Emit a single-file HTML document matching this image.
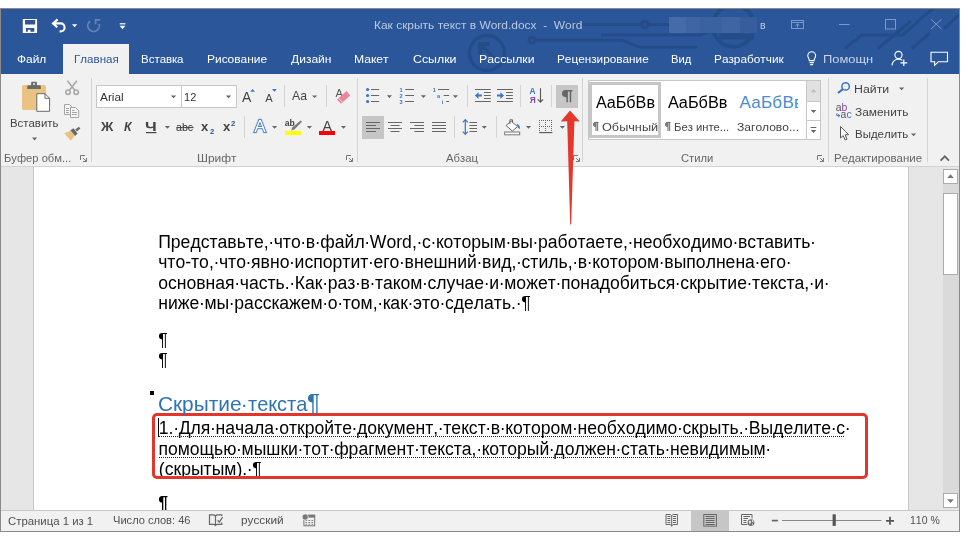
<!DOCTYPE html>
<html lang="ru"><head><meta charset="utf-8"><title>Word</title>
<style>
html,body{margin:0;padding:0;}
body{width:968px;height:541px;overflow:hidden;background:#fff;position:relative;font-family:"Liberation Sans",sans-serif;}
div,span,i{box-sizing:border-box;}
.a{position:absolute;}
.t{font-kerning:none;position:absolute;white-space:nowrap;line-height:1;transform-origin:0 0;}
#win{left:0;top:8px;width:960px;height:524px;background:#2b579a;overflow:hidden;}
#ribbon{left:1px;top:66px;width:958px;height:92px;background:#f1f1f1;}
#ribline{left:1px;top:158px;width:958px;height:1px;background:#d2d2d2;}
#tab{left:63px;top:36px;width:66px;height:31px;background:#f1f1f1;}
#docbg{left:1px;top:159px;width:958px;height:343px;background:#e6e6e6;}
#page{left:32px;top:0;width:876px;height:343px;background:#fff;border-right:1px solid #c8c8c8;border-left:1px solid #c8c8c8;overflow:hidden;}
#status{left:1px;top:502px;width:958px;height:21px;background:#f1f1f1;border-top:1px solid #c8c8c8;}
.bd{background:#8a8a8a;}
.vs{width:1px;background:#d4d4d4;}
.box{background:#fff;border:1px solid #c6c6c6;}
.sel{background:#c6c6c6;}
.dl{font-kerning:none;position:absolute;white-space:nowrap;line-height:1;font-size:17.6px;color:#000;transform-origin:0 0;}
.dl i{font-style:normal;margin:0 -0.37px;}
.dl u{text-decoration:none;background-image:linear-gradient(to right,#000 50%,transparent 50%);background-size:2px 1px;background-repeat:repeat-x;background-position:0 16.7px;}
.dot{height:1px;background-image:linear-gradient(to right,#222 50%,transparent 50%);background-size:2px 1px;background-repeat:repeat-x;}
#doc,#texts{will-change:transform;}

</style></head>
<body>
<div id="win" class="a">
  <svg class="a" style="left:0;top:-8px;" width="968" height="82" viewBox="0 0 968 82">
    <g fill="none" stroke="#244c89" stroke-width="3">
      <circle cx="487" cy="53" r="17.5" stroke-width="3.4"/>
      <path d="M495 59 L480 44 M480 54 V44 H490" stroke-width="3.8"/>
      <path d="M560 24.5 H641 M648.5 24.5 H672" />
      <circle cx="644.7" cy="24.5" r="3.2"/>
      <circle cx="532" cy="40.3" r="3"/>
      <path d="M535 40.3 H622 L640.6 47.3 H697"/>
      <path d="M601 34.9 H700 L712 30"/>
      <circle cx="733.5" cy="26" r="20.7" stroke-width="4"/>
      <path d="M719 31 H742 V33.5 H750 L754 36.5 V39.5 H719 Z" fill="#244c89" stroke="none"/>
      <path d="M845 48.5 L861.7 34.9 H903 L923.6 16.3 L934 8 M878 48.5 L911 21 M944 28.7 L960 14.2 M912 48.5 L930 33"/>
    </g>
  </svg>
  <div id="tab" class="a"></div>
  <div id="ribbon" class="a"></div>
  <div id="ribline" class="a"></div>
  <div id="docbg" class="a">
    <div id="page" class="a"></div>
    <!-- scrollbar -->
    <div class="a" style="left:942px;top:2px;width:16px;height:339px;background:#dadada;"></div>
    <div class="a" style="left:942px;top:2px;width:15px;height:15px;background:#fff;border:1px solid #ababab;"></div>
    <div class="a" style="left:942px;top:26px;width:15px;height:82px;background:#fff;border:1px solid #ababab;"></div>
    <div class="a" style="left:942px;top:326px;width:15px;height:15px;background:#fff;border:1px solid #ababab;"></div>
  </div>
  <div id="status" class="a">
    <div class="a sel" style="left:690px;top:0;width:38px;height:21px;"></div>
  </div>
  <!-- window border -->
  <div class="a bd" style="left:0;top:0;width:960px;height:1px;"></div>
  <div class="a bd" style="left:0;top:523px;width:960px;height:1px;"></div>
  <div class="a bd" style="left:0;top:0;width:1px;height:524px;"></div>
  <div class="a bd" style="left:959px;top:0;width:1px;height:524px;"></div>
</div>
<!-- ribbon controls (page coords) -->
<div class="a vs" style="left:91px;top:78px;height:84px;"></div>
<div class="a vs" style="left:357px;top:78px;height:84px;"></div>
<div class="a vs" style="left:582px;top:78px;height:84px;"></div>
<div class="a vs" style="left:828px;top:78px;height:84px;"></div>
<div class="a vs" style="left:927px;top:78px;height:84px;"></div>
<div class="a vs" style="left:284px;top:85px;height:22px;"></div>
<div class="a vs" style="left:326px;top:85px;height:22px;"></div>
<div class="a vs" style="left:467px;top:85px;height:22px;"></div>
<div class="a vs" style="left:520px;top:85px;height:22px;"></div>
<div class="a vs" style="left:551px;top:85px;height:22px;"></div>
<div class="a vs" style="left:244px;top:116px;height:22px;"></div>
<div class="a vs" style="left:454px;top:116px;height:22px;"></div>
<div class="a vs" style="left:496px;top:116px;height:22px;"></div>
<div class="a box" style="left:96px;top:85px;width:86px;height:23px;"></div>
<div class="a box" style="left:181px;top:85px;width:56px;height:23px;"></div>
<div class="a sel" style="left:362px;top:116px;width:22px;height:23px;"></div>
<div class="a sel" style="left:556px;top:85px;width:22px;height:23px;"></div>
<!-- styles gallery -->
<div class="a box" style="left:588px;top:80px;width:233px;height:60px;"></div>
<div class="a" style="left:589.3px;top:82px;width:72px;height:56px;border:3.5px solid #c6c6c6;"></div>
<div class="a" style="left:806px;top:81px;width:14px;height:21px;background:#e1e1e1;"></div>
<div class="a" style="left:806px;top:80px;width:1px;height:60px;background:#c6c6c6;"></div>
<div class="a" style="left:806px;top:101px;width:15px;height:1px;background:#c6c6c6;"></div>
<div class="a" style="left:806px;top:120px;width:15px;height:1px;background:#c6c6c6;"></div>
<div class="a" style="left:739px;top:84px;width:59px;height:30px;overflow:hidden;"><span class="t" style="left:0.5px;top:10px;font-size:17px;color:#4a8bd6;font-kerning:none;letter-spacing:0.3px;">АаБбВв</span></div>

<div id="doc" class="a" style="left:34px;top:167px;width:874px;height:343px;overflow:hidden;">
<div class="dl" style="left:124.20px;top:67.00px;">Представьте,<i>·</i>что<i>·</i>в<i>·</i>файл<i>·</i>Word,<i>·</i>с<i>·</i>которым<i>·</i>вы<i>·</i>работаете,<i>·</i>необходимо<i>·</i>вставить<i>·</i></div>
<div class="dl" style="left:124.20px;top:87.00px;">что-то,<i>·</i>что<i>·</i>явно<i>·</i>испортит<i>·</i>его<i>·</i>внешний<i>·</i>вид,<i>·</i>стиль,<i>·</i>в<i>·</i>котором<i>·</i>выполнена<i>·</i>его<i>·</i></div>
<div class="dl" style="left:124.20px;top:108.00px;">основная<i>·</i>часть.<i>·</i>Как<i>·</i>раз<i>·</i>в<i>·</i>таком<i>·</i>случае<i>·</i>и<i>·</i>может<i>·</i>понадобиться<i>·</i>скрытие<i>·</i>текста,<i>·</i>и<i>·</i></div>
<div class="dl" style="left:124.20px;top:128.00px;">ниже<i>·</i>мы<i>·</i>расскажем<i>·</i>о<i>·</i>том,<i>·</i>как<i>·</i>это<i>·</i>сделать.<i>·</i>¶</div>
<div class="dl" style="left:124.20px;top:165.00px;">¶</div>
<div class="dl" style="left:124.20px;top:185.00px;">¶</div>
<div class="dl" style="left:124.80px;top:253.00px;">1.<i>·</i>Для<i>·</i>начала<i>·</i>откройте<i>·</i>документ,<i>·</i>текст<i>·</i>в<i>·</i>котором<i>·</i>необходимо<i>·</i>скрыть.<i>·</i>Выделите<i>·</i>с<i>·</i></div>
<div class="dl" style="left:124.40px;top:274.00px;">помощью<i>·</i>мышки<i>·</i>тот<i>·</i>фрагмент<i>·</i>текста,<i>·</i>который<i>·</i>должен<i>·</i>стать<i>·</i>невидимым<i>·</i></div>
<div class="dl" style="left:124.80px;top:294.00px;">(скрытым).<i>·</i>¶</div>
<div class="dl" style="left:124.20px;top:328.00px;font-weight:bold;">¶</div>
<div class="a" style="left:116.3px;top:224.0px;width:3.5px;height:3.5px;background:#000;"></div>
<div class="a" style="left:124.0px;top:251.0px;width:1px;height:19.4px;background:#000;"></div>
<div class="a dot" style="left:125.0px;top:269.0px;width:684.6px;"></div>
<div class="a dot" style="left:125.0px;top:290.0px;width:606.0px;"></div>
<div class="a" style="left:118.3px;top:245.8px;width:716px;height:66px;border:3px solid #e2352b;border-radius:5px;"></div>
</div>

<div id="texts">
<span class="t" style="left:373.88px;top:19.00px;font-size:11.7px;color:#bac8e1;transform:scaleX(1.0228);white-space:pre;">Как скрыть текст в Word.docx  -  Word</span>
<span class="t" style="left:760.33px;top:19.00px;font-size:11.7px;color:#bac8e1;transform:scaleX(0.9000);">в</span>
<span class="t" style="left:16.73px;top:53.00px;font-size:11.7px;color:#fff;transform:scaleX(1.0202);">Файл</span>
<span class="t" style="left:73.51px;top:53.00px;font-size:11.7px;color:#2b579a;transform:scaleX(0.9931);">Главная</span>
<span class="t" style="left:141.12px;top:53.00px;font-size:11.7px;color:#fff;transform:scaleX(0.9812);">Вставка</span>
<span class="t" style="left:207.28px;top:53.00px;font-size:11.7px;color:#fff;transform:scaleX(1.0226);">Рисование</span>
<span class="t" style="left:290.90px;top:53.00px;font-size:11.7px;color:#fff;transform:scaleX(1.0312);">Дизайн</span>
<span class="t" style="left:354.36px;top:53.00px;font-size:11.7px;color:#fff;transform:scaleX(1.0438);">Макет</span>
<span class="t" style="left:412.67px;top:53.00px;font-size:11.7px;color:#fff;transform:scaleX(1.0575);">Ссылки</span>
<span class="t" style="left:479.25px;top:53.00px;font-size:11.7px;color:#fff;transform:scaleX(1.0510);">Рассылки</span>
<span class="t" style="left:556.69px;top:53.00px;font-size:11.7px;color:#fff;transform:scaleX(1.0078);">Рецензирование</span>
<span class="t" style="left:670.74px;top:53.00px;font-size:11.7px;color:#fff;transform:scaleX(0.9600);">Вид</span>
<span class="t" style="left:713.69px;top:53.00px;font-size:11.7px;color:#fff;transform:scaleX(1.0103);">Разработчик</span>
<span class="t" style="left:822.80px;top:53.00px;font-size:11.7px;color:#c9d5ea;transform:scaleX(1.1040);">Помощн</span>
<span class="t" style="left:9.53px;top:117.00px;font-size:11.7px;color:#444;transform:scaleX(0.9741);">Вставить</span>
<span class="t" style="left:3.72px;top:153.00px;font-size:10.75px;color:#666;transform:scaleX(1.0397);">Буфер обм...</span>
<span class="t" style="left:99.80px;top:91.00px;font-size:11.7px;color:#333;transform:scaleX(1.0110);">Arial</span>
<span class="t" style="left:184.19px;top:91.00px;font-size:11.7px;color:#333;transform:scaleX(0.9447);">12</span>
<span class="t" style="left:100.60px;top:121.00px;font-size:12.6px;color:#444;font-weight:bold;transform:scaleX(1.0783);">Ж</span>
<span class="t" style="left:123.96px;top:121.00px;font-size:12.6px;color:#444;font-weight:bold;font-style:italic;transform:scaleX(0.9697);">К</span>
<span class="t" style="left:145.41px;top:121.00px;font-size:12.6px;color:#444;font-weight:bold;transform:scaleX(1.3241);">Ч</span>
<span class="t" style="left:176.41px;top:122.00px;font-size:10.75px;color:#333;transform:scaleX(0.9879);">abc</span>
<span class="t" style="left:201.15px;top:120.00px;font-size:13px;color:#444;font-weight:bold;transform:scaleX(1.0074);">x</span>
<span class="t" style="left:222.75px;top:120.00px;font-size:13px;color:#444;font-weight:bold;transform:scaleX(1.0074);">x</span>
<span class="t" style="left:209.50px;top:129.00px;font-size:6.4px;color:#2b579a;font-weight:bold;transform:scaleX(1.2000);">2</span>
<span class="t" style="left:231.30px;top:121.00px;font-size:6.4px;color:#2b579a;font-weight:bold;transform:scaleX(1.2000);">2</span>
<span class="t" style="left:196.77px;top:153.00px;font-size:10.75px;color:#666;transform:scaleX(1.1108);">Шрифт</span>
<span class="t" style="left:292.00px;top:89.00px;font-size:13px;color:#444;transform:scaleX(0.9375);">Aa</span>
<span class="t" style="left:446.30px;top:153.00px;font-size:10.75px;color:#666;transform:scaleX(1.0479);">Абзац</span>
<span class="t" style="left:680.88px;top:153.00px;font-size:10.75px;color:#666;transform:scaleX(1.0454);">Стили</span>
<span class="t" style="left:833.80px;top:153.00px;font-size:10.75px;color:#666;transform:scaleX(1.0663);">Редактирование</span>
<span class="t" style="left:596.00px;top:95.00px;font-size:16px;color:#000;transform:scaleX(1.0095);">АаБбВв</span>
<span class="t" style="left:667.60px;top:95.00px;font-size:16px;color:#000;transform:scaleX(1.0165);">АаБбВв</span>
<span class="t" style="left:601.51px;top:122.00px;font-size:10.75px;color:#444;transform:scaleX(1.1805);">Обычный</span>
<span class="t" style="left:674.11px;top:122.00px;font-size:10.75px;color:#444;transform:scaleX(1.0471);">Без инте...</span>
<span class="t" style="left:737.14px;top:122.00px;font-size:10.75px;color:#444;transform:scaleX(1.1219);">Заголово...</span>
<span class="t" style="left:854.45px;top:83.00px;font-size:11.7px;color:#444;transform:scaleX(1.0540);">Найти</span>
<span class="t" style="left:854.99px;top:106.00px;font-size:11.7px;color:#444;transform:scaleX(1.0175);">Заменить</span>
<span class="t" style="left:854.52px;top:128.00px;font-size:11.7px;color:#444;transform:scaleX(0.9820);">Выделить</span>
<span class="t" style="left:7.57px;top:516.00px;font-size:10.75px;color:#505050;transform:scaleX(1.0571);">Страница 1 из 1</span>
<span class="t" style="left:112.73px;top:515.00px;font-size:10.75px;color:#505050;transform:scaleX(1.0332);">Число слов: 46</span>
<span class="t" style="left:240.88px;top:515.00px;font-size:10.75px;color:#505050;transform:scaleX(1.0960);">русский</span>
<span class="t" style="left:910.07px;top:515.00px;font-size:10.75px;color:#505050;transform:scaleX(0.9763);">110 %</span>
<span class="t" style="left:157.90px;top:394.00px;font-size:20.9px;color:#2e74b5;">Скрытие</span>
<span class="t" style="left:240.70px;top:394.00px;font-size:20.9px;color:#2e74b5;">·</span>
<span class="t" style="left:247.76px;top:394.00px;font-size:20.9px;color:#2e74b5;transform:scaleX(0.9571);">текста</span>
<span class="t" style="left:307.36px;top:392.00px;font-size:23.5px;color:#2e74b5;transform:scaleX(1.0419);">¶</span>
</div>
<svg class="a" style="left:0;top:0;" width="968" height="541" viewBox="0 0 968 541">
<!--TITLE-->
<g id="qat" fill="none" stroke="#fff">
  <!-- save -->
  <path d="M22.8 19.1 H37.1 V32.9 H22.8 Z M25 20 V24.4 H35.2 V20 Z M25.9 28 V31.7 H27.8 V29.8 H30.5 V31.7 H34.3 V28 Z" fill="#fff" fill-rule="evenodd" stroke="none"/>
  <!-- undo -->
  <path d="M57.6 19.4 L53 23.4 L57.2 27.2 M53.4 23.4 H60.6 A4 4 0 0 1 60.6 31.4 H59.6" stroke-width="2.1" stroke-linejoin="miter"/>
  <path d="M72 24.2 h5.2 l-2.6 3z" fill="#fff" stroke="none"/>
  <!-- redo (disabled) -->
  <g stroke="#6482ba" stroke-width="1.8">
    <path d="M99.2 24.1 A5.8 5.8 0 1 1 89.9 21.2"/>
    <path d="M95.6 24.3 V19.9 H100.2" />
  </g>
  <!-- customize -->
  <path d="M119.7 23.8 H125.4" stroke-width="1.2"/>
  <path d="M119.7 25.8 h5.7 l-2.85 3.4z" fill="#fff" stroke="none"/>
</g>
<!-- window controls (dim) -->
<g fill="none" stroke="#7f98c6" stroke-width="1">
  <rect x="791.5" y="20.5" width="12" height="8"/>
  <path d="M791.5 22.5 H803.5 M797.5 27.5 V24 M795.6 25.6 L797.5 23.8 L799.4 25.6"/>
  <path d="M839 24.5 H849.5"/>
  <rect x="885.5" y="19.5" width="10" height="9.5"/>
  <path d="M931 19.3 L941.5 29 M941.5 19.3 L931 29"/>
</g>
<!-- blurred name -->
<rect x="669" y="17" width="88" height="16" fill="#3f65a2"/>
<rect x="669" y="17" width="17" height="16" fill="#456ca9"/>
<rect x="700" y="17" width="22" height="16" fill="#3b62a0"/>
<rect x="740" y="17" width="17" height="16" fill="#375d9d"/>
<!-- tab icons -->
<g fill="none" stroke="#fff" stroke-width="1.1">
  <!-- bulb -->
  <path d="M809.3 60.6 C809.3 58.6 807.8 58 807.8 55.6 A3.9 3.9 0 0 1 815.6 55.6 C815.6 58 814.1 58.6 814.1 60.6 Z M809.6 62.6 H813.8 M810.2 64.6 H813.2"/>
  <!-- share -->
  <circle cx="898.5" cy="55" r="3.6"/>
  <path d="M892 65.4 C892.6 60.8 895.5 59.2 898.5 59.2 C900 59.2 901.4 59.6 902.4 60.4"/>
  <path d="M903.8 59.5 V66 M900.5 62.8 H907.2" stroke-width="1.2"/>
  <!-- comment -->
  <path d="M931 52.3 H947.5 V61.8 H938.3 L934.6 65.3 V61.8 H931 Z"/>
</g>
<!--RIBBON-->
<g id="clip">
  <!-- paste -->
  <rect x="22" y="85" width="24" height="25" rx="1.6" fill="#eac282"/>
  <path d="M27.2 89 V86.6 Q27.2 85.3 28.5 85.3 H31.1 V83 Q31.1 81.8 32.3 81.8 H35.7 Q36.9 81.8 36.9 83 V85.3 H39.5 Q40.8 85.3 40.8 86.6 V89 Z M33 83.2 V84.8 H35 V83.2 Z" fill="#6a6a6a" fill-rule="evenodd"/>
  <path d="M36.8 93.7 H45 L49.6 98.3 V111.3 H36.8 Z" fill="#fff" stroke="#6a6a6a" stroke-width="1"/>
  <path d="M45 93.7 V98.3 H49.6" fill="none" stroke="#6a6a6a" stroke-width="1"/>
  <path d="M32 137.6 h5.2 l-2.6 2.8z" fill="#666"/>
  <!-- scissors -->
  <g fill="none" stroke="#a8a8a8" stroke-width="1.6">
    <path d="M67.4 80.8 L75 90.4 M76.8 80.8 L69.2 90.4"/>
    <circle cx="68" cy="92.2" r="2.2"/><circle cx="76.2" cy="92.2" r="2.2"/>
  </g>
  <!-- copy -->
  <g fill="#f4f4f4" stroke="#a6a6a6" stroke-width="1">
    <path d="M64.5 104.5 H69.5 L72.5 107.5 V114.5 H64.5 Z"/>
    <path d="M70.5 107.5 H75.5 L78.7 110.7 V117.5 H70.5 Z"/>
    <path d="M66 108.5 H69 M66 110.5 H69 M66 112.5 H69 M72 112.5 H77 M72 114.5 H77 M72 110.5 H74.5" fill="none"/>
  </g>
  <!-- format painter -->
  <path d="M64.3 133.2 L70.6 130.8 L74.6 136 L70.8 140.8 Z" fill="#eac282"/>
  <path d="M70.4 130.2 L73.6 128.2 L77.6 133.4 L75 136 Z" fill="#6a6a6a"/>
  <path d="M75.3 129.6 L78.8 126.7 L80.4 128.4 L76.9 131.5 Z" fill="#6a6a6a"/>
</g>
<!--FONT-->
<g id="font" font-family="Liberation Sans, sans-serif">
  <!-- combobox arrows -->
  <path d="M170.8 95.4 h5.4 l-2.7 2.8z M225.8 95.4 h5.4 l-2.7 2.8z" fill="#666"/>
  <!-- grow/shrink -->
  <text x="242.1" y="102" font-size="14" fill="#444">A</text>
  <path d="M250.2 91.8 h4.8 l-2.4 -2.8z" fill="#3a76c4"/>
  <text x="265.2" y="102" font-size="11.2" fill="#444">A</text>
  <path d="M272 89 h4.8 l-2.4 2.8z" fill="#3a76c4"/>
  <path d="M312 95.4 h5.2 l-2.6 2.7z" fill="#666"/>
  <!-- clear formatting -->
  <text x="335.6" y="97" font-size="11" fill="#555">A</text>
  <path d="M346.6 91 L350.2 95.5 L341 103.8 L337 99.6 Z" fill="#e8869b"/>
  <path d="M338.6 98.2 L342.6 102.4" stroke="#f7d9df" stroke-width="1" fill="none"/>
  <!-- underline of Ч, strike of abc -->
  <path d="M146 132.6 H156.4" stroke="#444" stroke-width="1.2"/>
  <path d="M176.4 127.6 H193.6" stroke="#444" stroke-width="1"/>
  <path d="M164.8 126.1 h5.2 l-2.6 2.7z" fill="#666"/>
  <!-- text effects -->
  <text x="254.2" y="132.2" font-size="17.2" fill="#9fc0ea" stroke="#9fc0ea" stroke-width="3" opacity=".5">A</text>
  <text x="254.2" y="132.2" font-size="17.2" fill="#fff" stroke="#2f6fc0" stroke-width="1.5" paint-order="stroke">A</text>
  <path d="M272 126.1 h5.2 l-2.6 2.7z" fill="#666"/>
  <!-- highlight -->
  <text x="284.8" y="126.4" font-size="8.6" font-weight="bold" fill="#444">ab</text>
  <path d="M300.6 120.4 L302 121.8 L294.4 129.6 L291.2 130.6 L292.2 127.4 Z" fill="#7a7a7a"/>
  <rect x="285" y="131" width="16.2" height="4" fill="#ffff00"/>
  <path d="M306.8 126.1 h5.2 l-2.6 2.7z" fill="#666"/>
  <!-- font color -->
  <text x="322.4" y="131" font-size="14.2" fill="#444">A</text>
  <rect x="319" y="131" width="16" height="4" fill="#ff0000"/>
  <path d="M340.9 126.1 h5.2 l-2.6 2.7z" fill="#666"/>
  <!-- launcher -->
  <path d="M346.5 155.5 H351 M346.5 155.5 V160 M352.5 158 V161.5 H349 M349.2 158.2 L352.3 161.3" stroke="#777" stroke-width="1" fill="none"/>
</g>
<path d="M80.5 155.5 H85 M80.5 155.5 V160 M86.5 158 V161.5 H83 M83.2 158.2 L86.3 161.3" stroke="#777" stroke-width="1" fill="none"/>
<!--PARA-->
<g id="para" font-family="Liberation Sans, sans-serif">
<path d="M371.0 89.5 H379.2 M371.0 95.5 H379.2 M371.0 101.5 H379.2 " stroke="#666" stroke-width="1" fill="none"/>
<circle cx="367.6" cy="89.5" r="1.6" fill="#3a76c4"/>
<circle cx="367.6" cy="95.5" r="1.6" fill="#3a76c4"/>
<circle cx="367.6" cy="101.5" r="1.6" fill="#3a76c4"/>
<path d="M386.8 95.2 h5.2 l-2.6 2.7z M420.8 95.2 h5.2 l-2.6 2.7z M452.8 95.2 h5.2 l-2.6 2.7z" fill="#666"/>
<path d="M405.2 89.5 H414.0 M405.2 95.5 H414.0 M405.2 101.5 H414.0 " stroke="#666" stroke-width="1" fill="none"/>
<text x="399.6" y="91.6" font-size="5.6" font-weight="bold" fill="#3a76c4">1</text>
<text x="399.6" y="97.6" font-size="5.6" font-weight="bold" fill="#3a76c4">2</text>
<text x="399.6" y="103.6" font-size="5.6" font-weight="bold" fill="#3a76c4">3</text>
<path d="M438 89.5 H449.2 M443.6 95.5 H449.2 M446.2 101.5 H449.2" stroke="#666" stroke-width="1" fill="none"/>
<text x="432.8" y="91.6" font-size="5.6" font-weight="bold" fill="#3a76c4">1</text><text x="437" y="97.6" font-size="5.6" font-weight="bold" fill="#3a76c4">a</text><text x="441.8" y="103.6" font-size="5.6" font-weight="bold" fill="#3a76c4">i</text>
<path d="M474.9 89.5 H490.8 M483.9 92.5 H490.8 M483.9 95.5 H490.8 M483.9 98.5 H490.8 M474.9 101.5 H490.8" stroke="#666" stroke-width="1" fill="none"/>
<path d="M474.9 95.5 L478.5 92.3 V94.6 H481.9 V96.6 H478.5 V98.9 Z" fill="#3a76c4"/>
<path d="M497.0 89.5 H512.9 M506.0 92.5 H512.9 M506.0 95.5 H512.9 M506.0 98.5 H512.9 M497.0 101.5 H512.9" stroke="#666" stroke-width="1" fill="none"/>
<path d="M504.0 95.5 L500.4 92.3 V94.6 H497.0 V96.6 H500.4 V98.9 Z" fill="#3a76c4"/>
<text x="529.6" y="94.3" font-size="8.4" font-weight="bold" fill="#3a76c4">A</text><text x="529.8" y="102.7" font-size="8.4" font-weight="bold" fill="#8b44ac">Я</text>
<path d="M540.5 88.3 V102 M537.9 99.4 L540.5 102.2 L543.1 99.4" stroke="#555" stroke-width="1.1" fill="none"/>
<path d="M565.6 97.2 A3.6 3.6 0 0 1 565.6 90 H572.4 V91.4 H571.2 V102.2 H569.7 V91.4 H567.9 V102.2 H566.4 V97.2 Z" fill="#666"/>
<path d="M366.0 122.5 H380.0 M366.0 125.5 H376.0 M366.0 128.5 H380.0 M366.0 131.5 H376.0 " stroke="#666" stroke-width="1" fill="none"/>
<path d="M388.0 122.5 H402.0 M390.5 125.5 H399.5 M388.0 128.5 H402.0 M390.5 131.5 H399.5 " stroke="#666" stroke-width="1" fill="none"/>
<path d="M410.0 122.5 H424.0 M414.4 125.5 H424.0 M410.0 128.5 H424.0 M414.4 131.5 H424.0 " stroke="#666" stroke-width="1" fill="none"/>
<path d="M432.0 122.5 H446.0 M432.0 125.5 H446.0 M432.0 128.5 H446.0 M432.0 131.5 H446.0 " stroke="#666" stroke-width="1" fill="none"/>
<path d="M469.4 122.5 H477.0 M469.4 125.5 H477.0 M469.4 128.5 H477.0 M469.4 131.5 H477.0 " stroke="#666" stroke-width="1" fill="none"/>
<path d="M465.3 120 V134 M462.8 122.3 L465.3 119.6 L467.8 122.3 M462.8 131.7 L465.3 134.4 L467.8 131.7" stroke="#3a76c4" stroke-width="1.2" fill="none"/>
<path d="M481.7 126.1 h5.2 l-2.6 2.7z M525.9 126.1 h5.2 l-2.6 2.7z M559.8 126.1 h5.2 l-2.6 2.7z" fill="#666"/>
<rect x="504.7" y="132" width="15" height="2.8" fill="#fff" stroke="#777" stroke-width="1"/>
<path d="M511.2 121.2 L517.6 126.6 L512.4 131 L506 125.5 Z" fill="#fff" stroke="#666" stroke-width="1"/>
<path d="M509.9 124.2 V119.8 H512.5 V122.4" fill="none" stroke="#666" stroke-width="1"/>
<path d="M516.6 123.8 Q520.6 125.2 519.8 129 Q517.6 128 517.8 126.4 Z" fill="#3a76c4"/>
<path d="M539 120.5 H553 M539 126.5 H553 M539.5 120 V132 M545.5 120 V132 M551.5 120 V132" stroke="#666" stroke-width="1" stroke-dasharray="1 1" fill="none"/>
<path d="M539.1 132.6 H552.4" stroke="#555" stroke-width="1.1" fill="none"/>
<path d="M573.5 155.5 H578 M573.5 155.5 V160 M579.5 158 V161.5 H576 M576.2 158.2 L579.3 161.3" stroke="#777" stroke-width="1" fill="none"/>
</g>
<!--STYLES-->
<g id="styles" font-family="Liberation Sans, sans-serif">
<path d="M810.7 92.2 h5.6 l-2.8 -3.2z" fill="#bdbdbd"/>
<path d="M810.7 110 h5.6 l-2.8 3z M810.7 130 h5.6 l-2.8 3z" fill="#666"/>
<path d="M810.7 127.5 H816.3" stroke="#666" stroke-width="1" fill="none"/>
<path d="M817.5 155.5 H822 M817.5 155.5 V160 M823.5 158 V161.5 H820 M820.2 158.2 L823.3 161.3" stroke="#777" stroke-width="1" fill="none"/>
<circle cx="845.6" cy="86.4" r="3.7" fill="none" stroke="#3a76c4" stroke-width="1.5"/><path d="M842.9 89.2 L838 93" stroke="#3a76c4" stroke-width="2.2" fill="none"/>
<path d="M899 87.5 h5.2 l-2.6 2.7z M911 133.6 h5.2 l-2.6 2.7z" fill="#666"/>
<text x="835.8" y="110.7" font-size="10.4" fill="#555">a<tspan fill="#8b44ac">b</tspan></text>
<text x="840.6" y="117.7" font-size="10.4" fill="#555">a<tspan fill="#3a76c4">c</tspan></text>
<path d="M836.8 113.4 V115.6 H839.6 M838.2 114.2 L839.8 115.6 L838.2 117" stroke="#3a76c4" stroke-width="1" fill="none"/>
<path d="M840.5 126.6 V138 L843.2 135.6 L845.2 140 L847 139.2 L845.1 134.9 L848.6 134.6 Z" fill="#fff" stroke="#555" stroke-width="1" stroke-linejoin="miter"/>
<path d="M940.6 160.6 L944.8 156.4 L949 160.6" stroke="#666" stroke-width="1.9" fill="none"/>
</g>
<path d="M595.6 126.6 A2.1 2.1 0 0 1 595.6 122.4 H598.3 M596.0 122.4 V131 M597.7 122.4 V131" stroke="#555" stroke-width="0.9" fill="none"/><path d="M595.6 126.6 A2.1 2.1 0 0 1 595.6 122.4 H596.0 V126.6 Z" fill="#777"/>
<path d="M667.6 126.6 A2.1 2.1 0 0 1 667.6 122.4 H670.3 M668.0 122.4 V131 M669.7 122.4 V131" stroke="#555" stroke-width="0.9" fill="none"/><path d="M667.6 126.6 A2.1 2.1 0 0 1 667.6 122.4 H668.0 V126.6 Z" fill="#777"/>
<!--STATUS-->
<g id="status-icons" fill="none" stroke="#666" stroke-width="1">
<path d="M215.5 516 V526 M215.5 516 L214 514.9 H209.5 V524.4 H214 L215.5 525.6 L217 524.4 H221.8 V522.6 M215.5 516 L217 514.9 H221.8 V516" stroke-width="1.2"/>
<path d="M217.6 520.2 L219.3 522.2 L222.6 517.2" stroke-width="1.2"/>
<rect x="303.9" y="517" width="10.8" height="8.8" stroke="#777"/>
<path d="M305.4 520.5 H313.4 M305.4 522.5 H313.4 M305.4 524.3 H313.4" stroke="#8a8a8a" stroke-dasharray="1.8 1.2"/>
<rect x="307.5" y="514.6" width="7.7" height="2.6" fill="#777" stroke="none"/>
<circle cx="305.2" cy="517" r="3.1" fill="#777" stroke="#f1f1f1" stroke-width=".7"/>
<path d="M671.7 515.6 V526.6 M671.7 515.6 L670.2 514.5 H666 V524.5 H670.2 L671.7 525.6 L673.2 524.5 H677.4 V514.5 H673.2 Z"/>
<path d="M667.4 516.5 H670.4 M667.4 518.5 H670.4 M667.4 520.5 H670.4 M667.4 522.5 H670.4 M673 516.5 H676 M673 518.5 H676 M673 520.5 H676 M673 522.5 H676"/>
<rect x="703.8" y="514.5" width="12.6" height="11.6"/>
<path d="M705.6 516.5 H714.6 M705.6 518.5 H714.6 M705.6 520.5 H714.6 M705.6 522.5 H714.6 M705.6 524.5 H714.6"/>
<path d="M748 524.5 H741.5 V514.5 H752 V518.6"/>
<path d="M743.4 516.5 H750 M743.4 518.5 H748 M743.4 520.5 H746.6 M743.4 522.5 H746.6"/>
<circle cx="751" cy="522.6" r="4.2" fill="#f1f1f1" stroke="none"/>
<circle cx="751" cy="522.6" r="3.4" fill="#6e6e6e" stroke="none"/>
<path d="M748.6 521.2 L750.4 520.6 L751 522.4 L749.8 524.2 Z M752 519.9 L753.6 520.8 L753.2 522.6 L751.8 521.6 Z M751.6 523.8 L753 523.4 L752.4 525.2 Z" fill="#f1f1f1" stroke="none"/>
<path d="M771.8 520.6 H777.9" stroke-width="1.7"/>
<path d="M782 520.5 H881.5" stroke="#8a8a8a"/>
<rect x="832.6" y="514.3" width="3.2" height="11.6" fill="#555" stroke="none"/>
<path d="M886 520.8 H894 M890 516.8 V524.8" stroke="#555" stroke-width="1.7"/>
<path d="M947.2 178 h6.6 l-3.3 -3.8z M947.2 499.2 h6.6 l-3.3 3.8z" fill="#777" stroke="none"/>
</g>
<!--DECOR-->
<!--ARROW-->
<path d="M570 110.6 L579.8 121.4 L574.4 121.2 L571.2 224.6 L570.2 224.6 L567.2 121.2 L560.8 121.4 Z" fill="#e4382d"/>
</svg>

</body></html>
